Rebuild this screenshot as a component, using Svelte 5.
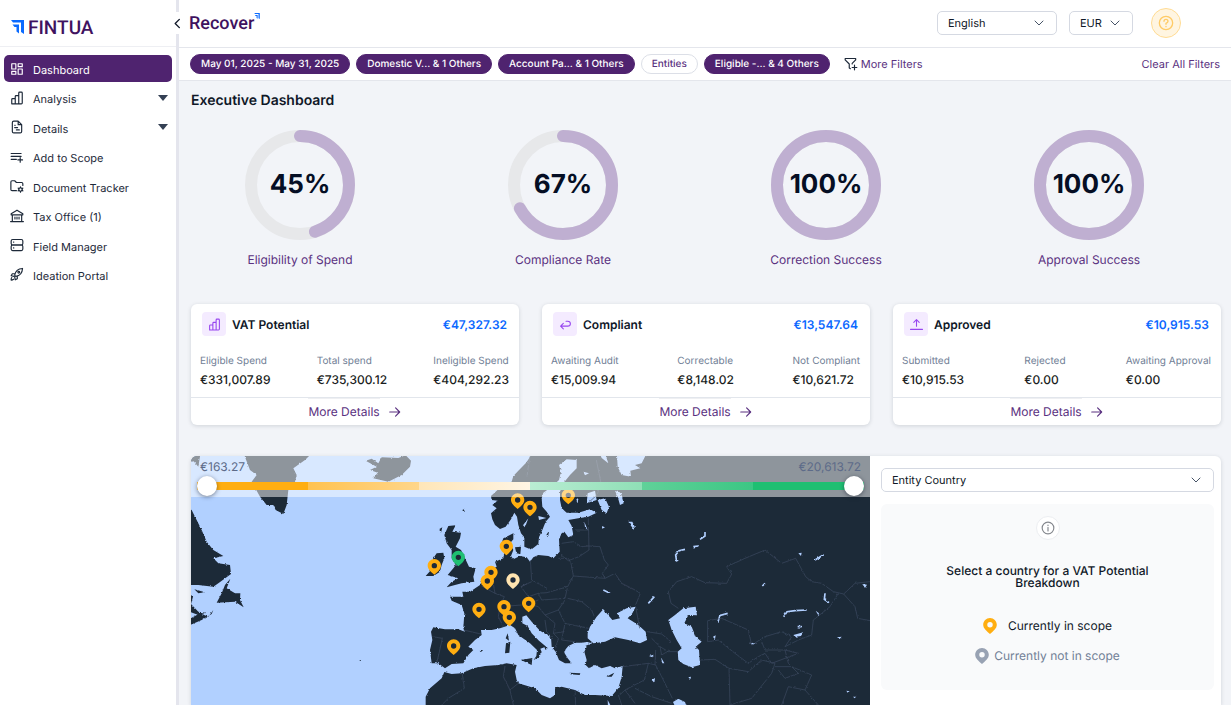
<script lang="ts">
  interface NavItem {
    label: string;
    icon: string;
    expandable?: boolean;
  }

  const navItems: NavItem[] = [
    { label: 'Dashboard', icon: 'grid' },
    { label: 'Analysis', icon: 'bars', expandable: true },
    { label: 'Details', icon: 'file', expandable: true },
    { label: 'Add to Scope', icon: 'list' },
    { label: 'Document Tracker', icon: 'folder' },
    { label: 'Tax Office (1)', icon: 'bank' },
    { label: 'Field Manager', icon: 'server' },
    { label: 'Ideation Portal', icon: 'rocket' },
  ];

  const filters = [
    { label: 'May 01, 2025 - May 31, 2025', applied: true },
    { label: 'Domestic V... & 1 Others', applied: true },
    { label: 'Account Pa... & 1 Others', applied: true },
    { label: 'Entities', applied: false },
    { label: 'Eligible -... & 4 Others', applied: true },
  ];

  const gauges = [
    { label: 'Eligibility of Spend', value: 45 },
    { label: 'Compliance Rate', value: 67 },
    { label: 'Correction Success', value: 100 },
    { label: 'Approval Success', value: 100 },
  ];

  const cards = [
    {
      title: 'VAT Potential',
      icon: 'bars',
      total: '€47,327.32',
      stats: [
        { label: 'Eligible Spend', value: '€331,007.89' },
        { label: 'Total spend', value: '€735,300.12' },
        { label: 'Ineligible Spend', value: '€404,292.23' },
      ],
    },
    {
      title: 'Compliant',
      icon: 'return',
      total: '€13,547.64',
      stats: [
        { label: 'Awaiting Audit', value: '€15,009.94' },
        { label: 'Correctable', value: '€8,148.02' },
        { label: 'Not Compliant', value: '€10,621.72' },
      ],
    },
    {
      title: 'Approved',
      icon: 'upload',
      total: '€10,915.53',
      stats: [
        { label: 'Submitted', value: '€10,915.53' },
        { label: 'Rejected', value: '€0.00' },
        { label: 'Awaiting Approval', value: '€0.00' },
      ],
    },
  ];

  // Pin positions in map units
  const pins = [
    { x: 998, y: 150, tone: 'amber' },
    { x: 1035, y: 172, tone: 'amber' },
    { x: 1150, y: 136, tone: 'amber' },
    { x: 964, y: 289, tone: 'amber' },
    { x: 820, y: 322, tone: 'green' },
    { x: 748, y: 347, tone: 'amber' },
    { x: 918, y: 367, tone: 'amber' },
    { x: 907, y: 393, tone: 'amber' },
    { x: 984, y: 390, tone: 'cream' },
    { x: 882, y: 478, tone: 'amber' },
    { x: 957, y: 470, tone: 'amber' },
    { x: 973, y: 502, tone: 'amber' },
    { x: 1031, y: 460, tone: 'amber' },
    { x: 806, y: 588, tone: 'amber' },
  ];

  const pinPath =
    'M0 -20C-11 -20 -20 -11 -20 0C-20 11 -9 19 0 27C9 19 20 11 20 0C20 -11 11 -20 0 -20ZM0 -8A8 8 0 1 1 0 8A8 8 0 1 1 0 -8Z';

  const radius = 49;
  const circumference = 2 * Math.PI * radius;

  let active = $state('Dashboard');
  let rangeMin = $state(0);
  let rangeMax = $state(100);
</script>

{#snippet icon(name: string)}
  <svg class="icon" viewBox="0 0 24 24" aria-hidden="true">
    {#if name === 'grid'}
      <rect x="3" y="3" width="7" height="9" /><rect x="14" y="3" width="7" height="5" />
      <rect x="14" y="12" width="7" height="9" /><rect x="3" y="16" width="7" height="5" />
    {:else if name === 'bars'}
      <path d="M3 22V14.500Q3 13 4.500 13H9V22ZM9 22V9.500Q9 8 10.500 8H15V22ZM15 22V3.500Q15 2 16.500 2H19.500Q21 2 21 3.500V20.500Q21 22 19.500 22H4.500Q3 22 3 20.500" />
    {:else if name === 'file'}
      <path d="M14 2H6.500Q4 2 4 4.500V19.500Q4 22 6.500 22H17.500Q20 22 20 19.500V8ZM14 2V8H20M8 9H9M8 13H13M11 17H16" />
    {:else if name === 'list'}
      <path d="M2 6H19M2 11H19M2 16H11M17.500 13V21M13.500 17H21.500" />
    {:else if name === 'folder'}
      <path d="M11 20H3.500Q1.500 20 1.500 18V5Q1.500 3 3.500 3H8L11 6H20Q22 6 22 8V11" />
      <circle cx="18" cy="18" r="3" /><path d="M18 13.500V15M18 21V22.500M14 15.700L15.400 16.500M20.600 19.500L22 20.300M14 20.300L15.400 19.500M20.600 16.500L22 15.700" />
    {:else if name === 'bank'}
      <path d="M2 10V8L12 2L22 8V10ZM4 10V21M20 10V21M1 21.500H23M8.500 14V17M12 14V17M15.500 14V17" />
    {:else if name === 'server'}
      <rect x="2" y="2.500" width="20" height="9.500" rx="2.500" /><rect x="2" y="12" width="20" height="9.500" rx="2.500" />
      <path d="M6 7H6.500M6 17H6.500" />
    {:else if name === 'rocket'}
      <path d="M8 14C9 8 13 3 21.500 2.500C21 11 16 15 10 16ZM8.500 11.500H4L2 15L7 16M12.500 15.500V20L9 22L8 17M3 18Q1.500 20 2 22.500Q4.500 22.500 6 21" />
      <circle cx="15" cy="9" r="1.500" />
    {:else if name === 'return'}
      <path d="M8 10L3 15L8 20M3 15H16Q21 15 21 10.500Q21 6 16 6H13" />
    {:else if name === 'upload'}
      <path d="M12 15V3M7 8L12 3L17 8M1 21H23" />
    {:else if name === 'funnel'}
      <path d="M11 20L9 19V12L2 5V2.500H20V5L14 11V12M18 14V22M14 18H22" />
    {:else if name === 'info'}
      <circle cx="12" cy="12" r="10" /><path d="M12 11V17M12 7V7.500" />
    {:else if name === 'help'}
      <circle cx="12" cy="12" r="10" /><path d="M9 9.500Q9 6.500 12 6.500Q15 6.500 15 9.300Q15 11 12 12.500V14M12 17V17.500" />
    {:else if name === 'arrow'}
      <path d="M3 12H20M13 5L20 12L13 19" />
    {:else if name === 'down'}
      <path d="M4 8L12 16L20 8" />
    {:else if name === 'left'}
      <path d="M16 3L7 12L16 21" />
    {/if}
  </svg>
{/snippet}

{#snippet brandMark()}
  <svg class="mark" viewBox="0 0 26 28" aria-hidden="true">
    <path class="mark-solid" d="M0 0H26V28L20 24V5H4Z" />
    <path class="mark-solid" d="M3 9H16V27L11 23V14H7Z" />
  </svg>
{/snippet}

<div class="app">
  <aside class="sidebar">
    <a class="brand" href="#home">{@render brandMark()}<span>FINTUA</span></a>
    <button class="collapse" aria-label="Collapse menu">{@render icon('left')}</button>
    <nav>
      {#each navItems as item}
        <a
          class="nav-item"
          class:active={active === item.label}
          href="#{item.icon}"
          onclick={() => (active = item.label)}
        >
          {@render icon(item.icon)}
          <span>{item.label}</span>
          {#if item.expandable}<i class="caret"></i>{/if}
        </a>
      {/each}
    </nav>
  </aside>

  <div class="page">
    <header class="topbar">
      <div class="product">Recover{@render brandMark()}</div>
      <div class="select-box language">
        <select aria-label="Language"><option>English</option></select>
        {@render icon('down')}
      </div>
      <div class="select-box currency">
        <select aria-label="Currency"><option>EUR</option></select>
        {@render icon('down')}
      </div>
      <button class="help" aria-label="Help">{@render icon('help')}</button>
    </header>

    <div class="filters">
      {#each filters as filter}
        <button class="pill" class:applied={filter.applied}>{filter.label}</button>
      {/each}
      <button class="text-btn more">{@render icon('funnel')}More Filters</button>
      <button class="text-btn clear">Clear All Filters</button>
    </div>

    <main>
      <h1>Executive Dashboard</h1>

      <section class="gauges">
        {#each gauges as gauge}
          <figure class="gauge">
            <div class="dial">
              <svg viewBox="0 0 110 110" aria-hidden="true">
                <circle class="track" cx="55" cy="55" r={radius} />
                <circle
                  class="arc"
                  cx="55"
                  cy="55"
                  r={radius}
                  transform="rotate(-90 55 55)"
                  stroke-dasharray="{(circumference * gauge.value) / 100} {circumference}"
                />
              </svg>
              <strong>{gauge.value}%</strong>
            </div>
            <figcaption>{gauge.label}</figcaption>
          </figure>
        {/each}
      </section>

      <section class="cards">
        {#each cards as card}
          <article class="card">
            <div class="card-head">
              <span class="badge">{@render icon(card.icon)}</span>
              <h2>{card.title}</h2>
              <span class="total">{card.total}</span>
            </div>
            <dl class="stats">
              {#each card.stats as stat}
                <div>
                  <dt>{stat.label}</dt>
                  <dd>{stat.value}</dd>
                </div>
              {/each}
            </dl>
            <a class="details" href="#details"><span>More Details</span>{@render icon('arrow')}</a>
          </article>
        {/each}
      </section>

      <section class="explorer">
        <div class="map">
          <svg class="world" viewBox="18 18 2037 747" preserveAspectRatio="xMidYMin slice" role="img" aria-label="Map of VAT potential by country">
            <defs>
              <filter id="coast" x="0" y="0" width="100%" height="100%">
                <feTurbulence type="fractalNoise" baseFrequency="0.12" numOctaves="3" seed="4" />
                <feDisplacementMap in="SourceGraphic" scale="7" xChannelSelector="R" yChannelSelector="G" />
              </filter>
            </defs>
            <g filter="url(#coast)">
              <rect class="water" x="-20" y="-20" width="2120" height="830" />
              <!-- Eurasia and North Africa -->
              <path
                class="land"
                d="M1040 -10L1035 22L1022 40L1000 62L985 78L980 95L960 100L940 118L918 138L920 150L938 152L922 165L935 175L918 190L922 208L930 225L945 237L962 230L978 208L988 188L996 200L1000 225L1008 250L1018 262L1018 290L1036 298L1042 296L1060 282L1062 262L1072 240L1082 215L1095 200L1085 185L1072 170L1070 145L1075 128L1100 110L1122 90L1128 65L1122 45L1145 28L1175 30L1175 55L1155 75L1135 100L1125 125L1125 150L1130 175L1145 188L1180 188L1215 178L1235 188L1210 200L1180 205L1150 210L1160 228L1165 255L1150 262L1138 245L1130 250L1122 268L1124 305L1105 325L1090 318L1060 315L1045 322L1035 335L1025 322L1005 318L985 328L978 318L985 300L975 280L985 268L985 250L955 265L948 285L958 305L955 325L930 335L935 350L905 365L895 385L885 405L855 425L832 425L835 440L795 440L800 452L830 465L838 490L835 535L840 545L820 538L780 538L745 532L738 545L742 570L735 600L740 640L760 640L780 655L800 642L835 640L850 615L865 600L850 590L870 570L890 555L888 540L920 540L945 535L975 525L990 535L1000 555L1035 580L1056 600L1054 618L1046 630L1062 622L1070 606L1066 596L1078 592L1082 600L1088 594L1062 572L1040 550L1028 528L1012 520L1012 500L1024 496L1040 515L1065 542L1098 562L1100 590L1112 605L1122 630L1140 640L1160 640L1148 625L1138 608L1142 598L1150 588L1170 578L1192 578L1205 590L1198 605L1205 630L1202 645L1212 655L1230 645L1250 655L1275 648L1290 655L1313 648L1310 680L1300 715L1280 738L1230 735L1200 735L1170 720L1130 710L1110 715L1110 735L1095 745L1070 735L1050 715L1020 706L1000 700L995 690L990 665L995 645L965 640L940 645L900 648L865 655L830 670L800 672L778 666L770 685L735 715L722 740L722 800L2100 800L2100 -10Z"
              />
              <!-- North America, Greenland, Iceland -->
              <path class="land" d="M0 170L20 180L30 200L50 240L65 275L85 300L115 318L85 325L100 340L135 345L138 372L100 400L85 410L40 405L0 405Z" />
              <path class="land" d="M136 386L125 415L150 430L166 430L165 450L176 472L150 455L95 458L110 430L120 405Z" />
              <path class="land" d="M0 514L45 490L70 500L85 480L80 492L50 510L0 532ZM0 420L24 440L18 462L40 485L62 488L40 495L0 480ZM28 418L60 427L40 430Z" />
              <path class="land" d="M172 0L195 60L215 75L200 95L225 140L245 165L265 165L272 180L295 192L305 165L310 120L330 95L335 75L325 55L360 30L390 0ZM0 0L48 0L40 50L26 34L0 40Z" />
              <path class="land" d="M542 32L560 26L580 40L590 22L640 24L662 16L678 32L675 50L650 75L610 95L565 85L578 68L555 60L575 50Z" />
              <!-- British Isles -->
              <path class="land" d="M790 228L812 226L802 245L828 248L825 265L812 290L828 300L840 325L852 350L872 355L865 380L868 395L830 400L810 405L785 412L800 395L820 385L788 375L805 355L812 345L800 325L800 300L785 280L778 255Z" />
              <path class="land" d="M755 310L775 308L778 325L770 345L765 365L745 378L722 378L738 360L730 345L745 325ZM762 238L772 232L768 248Z" />
              <!-- Islands -->
              <path class="land" d="M968 550L972 572L962 565ZM963 580L976 575L973 608L960 610ZM1008 630L1042 624L1040 645ZM884 600L894 600L890 605ZM1154 668L1186 670L1184 675L1156 673ZM1264 680L1288 668L1280 680ZM990 292L1008 290L1006 312L994 310ZM1084 255L1092 242L1090 258ZM756 134L770 128M832 180L840 176L836 186ZM522 630L528 630L528 633Z" />
              <!-- Inland seas -->
              <path class="water" d="M1208 550L1215 530L1235 500L1255 478L1265 490L1282 510L1305 505L1296 490L1325 475L1352 470L1342 490L1328 505L1360 525L1382 545L1386 570L1365 580L1330 570L1290 562L1260 575L1225 580L1208 565ZM1180 580L1206 576L1222 580L1200 588Z" />
              <path class="water" d="M1450 510L1470 495L1495 475L1532 470L1536 496L1510 495L1498 520L1520 530L1532 560L1550 575L1532 590L1542 600L1545 645L1520 652L1495 642L1480 630L1478 605L1490 595L1475 570L1460 540Z" />
              <path class="water" d="M1238 150L1260 145L1272 170L1265 190L1250 180ZM1290 122L1308 130L1316 160L1305 165L1298 140ZM1295 0L1390 0L1370 40L1350 45L1366 55L1336 62L1338 80L1310 75L1298 50ZM1240 0L1265 25L1270 40L1250 24ZM1195 65L1212 70L1200 76ZM1198 215L1208 240L1200 232ZM1330 215L1342 215L1350 232L1344 236ZM1250 228L1260 232L1252 236ZM1208 130L1230 122L1235 150L1205 160ZM1030 205L1020 232L1014 226ZM1060 198L1084 204L1062 210Z" />
              <path class="water" d="M1464 756L1480 746L1500 756L1512 790L1480 790ZM1268 750L1276 765L1284 800L1270 790ZM1825 555L1855 547L1848 558L1830 560ZM1840 310L1850 308L1848 318ZM1892 482L1902 490L1900 496ZM2032 402L2046 404L2040 414ZM1956 562L1970 560L1964 567ZM1400 690L1410 684L1408 698ZM1392 618L1406 614L1402 622ZM1428 622L1438 640L1432 640ZM1510 682L1518 680L1516 688ZM1584 560L1592 556L1590 568ZM1696 578L1716 580L1700 584ZM1984 722L1994 724L1988 728ZM2004 740L2014 740L2008 745Z" />
              <path class="lake" d="M1475 335L1472 315L1482 302L1500 298M1525 290L1540 288M1545 268L1560 258L1560 246M1598 518L1605 496L1628 490M1796 500L1806 485L1830 482L1865 480M1890 330L1916 314M1920 430L1918 448L1932 458M1390 460L1408 440M1255 420L1275 430M1732 408L1740 400M1838 530L1850 530M1176 145L1180 158M1012 300L1024 308" />
            </g>
            <!-- Country borders -->
            <g class="borders" filter="url(#coast)">
              <path d="M1034 20L1026 80M1234 30L1248 100L1236 135L1208 160M1210 205L1212 300L1182 320L1150 332L1128 315M1130 280L1165 275L1190 290L1212 288M1212 240L1170 240M1212 288L1245 290L1258 330L1270 345L1252 370L1260 385L1165 378L1158 340L1150 325L1120 325M1165 378L1148 410L1140 445L1070 450L1060 430L1086 428L1148 410M1036 330L1040 390L1086 415M1040 395L1008 410L1030 440L1060 430M1260 385L1290 370L1310 400L1350 420L1366 430L1352 465M1148 445L1190 455L1220 480L1228 500M1140 450L1120 480L1140 520L1210 535M1140 520L1130 570L1170 575M1120 480L1080 495L1060 470L1030 462L1060 450M1080 495L1110 520L1105 550L1138 545M1105 550L1120 565L1112 595M1080 510L1085 545L1100 560" />
              <path d="M1352 470L1364 535M1386 545L1430 552L1458 575M1400 565L1425 590L1450 605L1478 605M1425 590L1430 615L1455 600M1313 650L1390 640L1412 645L1430 680L1462 745M1390 640L1378 690L1320 720L1304 735M1320 720L1350 760M1350 715L1400 740L1460 760M1170 720L1172 765M1300 735L1310 765M1412 600L1410 645" />
              <path d="M1480 475L1458 460L1450 425L1475 395L1520 380L1560 398L1625 400L1640 372L1625 350L1680 325L1740 300L1790 340L1832 325L1862 380L1880 395L1910 400L1945 425L1976 432L2010 400L2055 395M1976 432L2010 470L2018 505L2055 512M1960 430L1935 470L1885 510L1880 555L1840 570L1800 590L1820 560L1790 545L1740 560L1700 585L1690 540L1610 505L1568 512L1568 575L1600 570L1650 610L1690 640L1720 620L1740 610L1760 640L1840 610L1800 600L1740 600L1730 575" />
              <path d="M1545 630L1590 628L1632 655L1635 765M1632 655L1690 665L1730 630L1770 640L1760 670L1720 720L1700 745L1635 765M1770 650L1820 650L1880 675L1860 720L1810 710L1790 765M1860 720L1900 765M1800 600L1810 640L1840 670L1800 685L1780 660" />
              <path d="M742 560L772 565L762 610L755 640M835 540L888 552M890 408L930 430L958 440L945 470L940 500L955 530M945 470L1010 465M1008 410L1028 400M832 672L838 715L790 745L770 765M960 648L955 680L975 720L985 765M975 720L1000 700M905 380L925 400L930 430" />
            </g>
            {#each pins as pin}
              <g transform="translate({pin.x} {pin.y})">
                <circle class="pin-hole" r="10" />
                <path class="pin {pin.tone}" d={pinPath} />
              </g>
            {/each}
          </svg>
          <div class="scale">
            <div class="scale-labels"><span>€163.27</span><span>€20,613.72</span></div>
            <div class="slider">
              <div class="bands"><i></i><i></i><i></i><i></i><i></i><i></i></div>
              <input type="range" aria-label="Minimum value" bind:value={rangeMin} />
              <input type="range" aria-label="Maximum value" bind:value={rangeMax} />
            </div>
          </div>
        </div>

        <div class="breakdown">
          <div class="select-box">
            <select aria-label="Entity Country"><option>Entity Country</option></select>
            {@render icon('down')}
          </div>
          <div class="empty">
            <span class="info">{@render icon('info')}</span>
            <p>Select a country for a VAT Potential Breakdown</p>
            <ul>
              <li class="in-scope">
                <svg viewBox="-20 -20 40 47" aria-hidden="true"><path class="pin amber" d={pinPath} /></svg>
                Currently in scope
              </li>
              <li class="out-scope">
                <svg viewBox="-20 -20 40 47" aria-hidden="true"><path class="pin grey" d={pinPath} /></svg>
                Currently not in scope
              </li>
            </ul>
          </div>
        </div>
      </section>
    </main>
  </div>
</div>

<style>
  :global(body) {
    margin: 0;
    background: #f2f4f8;
  }

  .app {
    --purple: #4f236f;
    --ink: #101828;
    --line: #e4e6ec;
    display: flex;
    min-height: 100vh;
    font-family: Inter, 'Liberation Sans', sans-serif;
    font-size: 11px;
    text-rendering: geometricPrecision;
    color: var(--ink);
  }

  .app * {
    box-sizing: border-box;
  }

  button,
  select {
    font: inherit;
    color: inherit;
    text-rendering: inherit;
    cursor: pointer;
  }

  a {
    color: inherit;
    text-decoration: none;
  }

  .icon {
    width: 14px;
    height: 14px;
    flex-shrink: 0;
    fill: none;
    stroke: currentColor;
    stroke-width: 2;
    stroke-linejoin: round;
    stroke-linecap: round;
  }

  .mark-solid {
    fill: #0b6bff;
  }

  /* Sidebar */
  .sidebar {
    position: relative;
    width: 179px;
    flex-shrink: 0;
    background: #fff;
    border-right: 3px solid #e4e5ed;
  }

  .brand {
    display: flex;
    align-items: center;
    gap: 4px;
    height: 47px;
    padding: 8px 11px 0;
    border-bottom: 1px solid #eeeff3;
    font-family: Roboto, sans-serif;
    font-size: 19px;
    font-weight: 500;
    color: #3f1260;
  }

  .brand .mark {
    width: 13px;
    height: 14px;
  }

  .collapse {
    position: absolute;
    top: 12px;
    right: -12px;
    display: grid;
    place-items: center;
    width: 22px;
    height: 22px;
    padding: 0;
    border: 0;
    border-radius: 5px;
    background: #fff;
  }

  .collapse .icon {
    width: 11px;
    height: 11px;
    stroke-width: 3;
  }

  nav {
    display: flex;
    flex-direction: column;
    justify-content: space-between;
    height: 233px;
    margin: 8px 4px;
  }

  .nav-item {
    display: flex;
    align-items: center;
    gap: 9px;
    height: 27px;
    padding: 3px 4px 0 6px;
    border-radius: 5px;
    color: #1d2939;
  }

  .nav-item .icon {
    margin-bottom: 3px;
  }

  .nav-item.active {
    background: var(--purple);
    color: #fff;
  }

  .caret {
    margin-left: auto;
    margin-bottom: 3px;
    border: 5px solid transparent;
    border-top: 6px solid #344054;
    border-bottom: 0;
  }

  /* Top bar */
  .page {
    display: flex;
    flex-direction: column;
    flex: 1;
    min-width: 0;
  }

  .topbar {
    display: flex;
    align-items: center;
    gap: 12px;
    height: 48px;
    padding: 0 50px 1px 10px;
    background: #fff;
    border-bottom: 1px solid var(--line);
  }

  .product {
    display: flex;
    flex: 1;
    font-family: Roboto, sans-serif;
    font-size: 18px;
    font-weight: 500;
    color: #3f1260;
  }

  .product .mark {
    width: 6px;
    height: 6px;
  }

  .select-box {
    display: grid;
    align-items: center;
  }

  .select-box select,
  .select-box .icon {
    grid-area: 1 / 1;
  }

  .select-box select {
    appearance: none;
    width: 100%;
    height: 24px;
    padding: 0 10px;
    border: 1px solid #d5d9e2;
    border-radius: 5px;
    background: #fff;
  }

  .select-box .icon {
    justify-self: end;
    width: 12px;
    height: 12px;
    margin-right: 12px;
    color: #475467;
    pointer-events: none;
  }

  .language {
    width: 120px;
  }

  .currency {
    width: 64px;
  }

  .help {
    display: grid;
    place-items: center;
    width: 30px;
    height: 30px;
    margin-left: 6px;
    padding: 0;
    border: 1px solid #ffdc94;
    border-radius: 50%;
    background: #fff5e1;
    color: #ffcb66;
  }

  .help .icon {
    width: 16px;
    height: 16px;
  }

  .filters {
    display: flex;
    align-items: center;
    gap: 6px;
    height: 33px;
    padding: 0 11px;
    background: #fff;
    border-bottom: 1px solid var(--line);
  }

  .pill {
    height: 20px;
    padding: 0 10px;
    border: 1px solid #dcdfe7;
    border-radius: 10px;
    background: #fff;
    font-size: 10px;
    font-weight: 500;
    color: #5a3180;
    white-space: nowrap;
  }

  .pill.applied {
    border-color: var(--purple);
    background: var(--purple);
    color: #fff;
  }

  .text-btn {
    display: flex;
    align-items: center;
    gap: 3px;
    padding: 0;
    border: 0;
    background: none;
    color: #5a3180;
    white-space: nowrap;
  }

  .text-btn .icon {
    color: #1d2939;
  }

  .more {
    margin-left: 8px;
  }

  .clear {
    margin-left: auto;
  }

  /* Dashboard */
  main {
    display: flex;
    flex-direction: column;
    flex: 1;
    padding: 12px 10px 0 12px;
  }

  h1 {
    margin: 0;
    font-size: 14px;
    font-weight: 600;
    line-height: 16px;
  }

  .gauges {
    display: grid;
    grid-template-columns: repeat(4, 1fr);
    gap: 45px;
    margin-top: 21px;
    padding-right: 23px;
  }

  .gauge {
    display: flex;
    flex-direction: column;
    align-items: center;
    gap: 12px;
    margin: 0;
  }

  .dial {
    display: grid;
    place-items: center;
    width: 110px;
    height: 110px;
  }

  .dial svg,
  .dial strong {
    grid-area: 1 / 1;
  }

  .dial svg {
    width: 110px;
    height: 110px;
    fill: none;
    stroke-width: 12px;
  }

  .track {
    stroke: #e7e8ea;
  }

  .arc {
    stroke: #bfafd1;
    stroke-linecap: round;
  }

  .dial strong {
    padding-bottom: 1px;
    font-size: 26px;
    font-weight: 700;
    color: #050e24;
  }

  figcaption {
    font-size: 12px;
    line-height: 16px;
    color: #5a3180;
  }

  .cards {
    display: grid;
    grid-template-columns: repeat(3, minmax(0, 1fr));
    gap: 23px;
    margin-top: 36px;
  }

  .card {
    border-radius: 6px;
    background: #fff;
    box-shadow: 0 1px 4px rgba(16, 24, 40, 0.15);
  }

  .card-head {
    display: flex;
    align-items: center;
    gap: 6px;
    padding: 8px 12px 0 11px;
    font-size: 12px;
    font-weight: 600;
  }

  .badge {
    display: grid;
    place-items: center;
    width: 24px;
    height: 24px;
    border-radius: 4px;
    background: #f4ebff;
    color: #9747ef;
  }

  .badge .icon {
    width: 13px;
    height: 13px;
  }

  h2 {
    flex: 1;
    margin: 0;
    font-size: 12px;
    font-weight: 600;
  }

  .total {
    color: #0b68ff;
  }

  .stats {
    display: flex;
    justify-content: space-between;
    margin: 0;
    padding: 17px 10px 8px 9px;
  }

  dt {
    font-size: 10px;
    line-height: 17px;
    color: #718096;
  }

  dd {
    margin: 0;
    font-size: 12px;
    font-weight: 500;
    line-height: 19px;
    color: #1a1d21;
  }

  .details {
    display: flex;
    align-items: center;
    justify-content: center;
    gap: 8px;
    height: 28px;
    border-top: 1px solid #e2e6ec;
    font-size: 12px;
    line-height: 26px;
    color: #5a3180;
  }

  .details span {
    border-top: 1px solid #eeeff2;
  }

  /* Map and breakdown */
  .explorer {
    display: grid;
    grid-template-columns: minmax(0, 679fr) minmax(0, 351fr);
    flex: 1;
    min-height: 249px;
    margin-top: 31px;
    border-radius: 6px 6px 0 0;
    overflow: hidden;
    background: #fff;
    box-shadow: 0 1px 4px rgba(16, 24, 40, 0.15);
  }

  .map {
    position: relative;
    overflow: hidden;
    background: #b1d0ff;
  }

  .world {
    position: absolute;
    width: 100%;
    height: 100%;
  }

  .water {
    fill: #b1d0ff;
  }

  .land,
  .pin-hole {
    fill: #1d2939;
  }

  .lake {
    fill: none;
    stroke: #b1d0ff;
    stroke-width: 5;
  }

  .borders {
    fill: none;
    stroke: #3d4a60;
    stroke-width: 2;
  }

  .pin {
    fill-rule: evenodd;
  }

  .amber {
    fill: #ffae11;
  }

  .green {
    fill: #1fbf72;
  }

  .cream {
    fill: #ffe4b0;
  }

  .grey {
    fill: #98a2b3;
  }

  .scale {
    position: relative;
    height: 41px;
    padding: 3px 6px 0;
    background: rgba(255, 255, 255, 0.5);
  }

  .scale-labels {
    display: flex;
    justify-content: space-between;
    padding: 0 3px;
    font-size: 12px;
    line-height: 16px;
    color: #5d6b89;
  }

  .slider {
    display: grid;
    align-items: center;
    height: 21px;
  }

  .bands,
  .slider input {
    grid-area: 1 / 1;
  }

  .bands {
    display: grid;
    grid-template-columns: repeat(6, 1fr);
    height: 8px;
  }

  .bands i:nth-child(1) {
    background: #ffae11;
  }

  .bands i:nth-child(2) {
    background: linear-gradient(90deg, #ffc250, #ffd68a);
  }

  .bands i:nth-child(3) {
    background: linear-gradient(90deg, #ffe6b8, #fff5e4);
  }

  .bands i:nth-child(4) {
    background: linear-gradient(90deg, #baedd3, #8fdfb6);
  }

  .bands i:nth-child(5) {
    background: linear-gradient(90deg, #60d199, #3cc684);
  }

  .bands i:nth-child(6) {
    background: #1fbf72;
  }

  .slider input {
    appearance: none;
    width: 100%;
    height: 20px;
    margin: 0;
    background: none;
    pointer-events: none;
  }

  .slider input::-webkit-slider-thumb {
    appearance: none;
    width: 20px;
    height: 20px;
    border-radius: 50%;
    background: #fff;
    box-shadow: 0 1px 4px rgba(16, 24, 40, 0.5);
    pointer-events: auto;
    cursor: pointer;
  }

  .breakdown {
    padding: 12px 7px 15px 11px;
  }

  .empty {
    display: flex;
    flex-direction: column;
    align-items: center;
    margin-top: 12px;
    padding: 12px 40px 26px;
    border-radius: 6px;
    background: #f9fafb;
    font-size: 12px;
  }

  .info {
    display: grid;
    place-items: center;
    width: 24px;
    height: 24px;
    border: 1px solid #eceef1;
    border-radius: 50%;
    background: #fff;
    color: #85888e;
  }

  .empty p {
    max-width: 220px;
    margin: 25px 0 0;
    font-weight: 500;
    line-height: 12px;
    text-align: center;
  }

  ul {
    display: flex;
    flex-direction: column;
    align-items: center;
    gap: 14px;
    margin: 29px 0 0;
    padding: 0;
    list-style: none;
  }

  li {
    display: flex;
    align-items: center;
    gap: 5px;
    line-height: 16px;
  }

  li svg {
    width: 14px;
    height: 16px;
  }

  .in-scope {
    gap: 11px;
  }

  .out-scope {
    color: #718096;
  }
</style>
